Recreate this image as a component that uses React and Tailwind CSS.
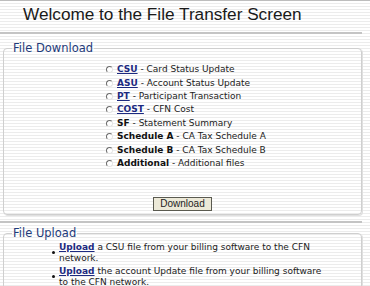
const stripes =
  "bg-[repeating-linear-gradient(to_bottom,#ffffff_0px,#ffffff_2px,#ececec_2px,#ececec_3px)]";

const Radio = () => (
  <span className="inline-block w-[7px] h-[7px] rounded-full border border-t-[#6b6b6b] border-l-[#6b6b6b] border-b-[#e4e4e4] border-r-[#e4e4e4] bg-white shrink-0" />
);

const files = [
  { code: "CSU", label: "Card Status Update", link: true },
  { code: "ASU", label: "Account Status Update", link: true },
  { code: "PT", label: "Participant Transaction", link: true },
  { code: "COST", label: "CFN Cost", link: true },
  { code: "SF", label: "Statement Summary" },
  { code: "Schedule A", label: "CA Tax Schedule A" },
  { code: "Schedule B", label: "CA Tax Schedule B" },
  { code: "Additional", label: "Additional files" },
];

const uploads = [
  "a CSU file from your billing software to the CFN network.",
  "the account Update file from your billing software to the CFN network.",
];

export default function App() {
  return (
    <div
      className={`w-[370px] h-[286px] overflow-hidden border-t border-[#bdbdbd] text-[#222] ${stripes}`}
      style={{ fontFamily: '"DejaVu Sans", Verdana, sans-serif' }}
    >
      <h1 className="pl-[23px] pt-[3px] h-[31px] text-[17.2px] leading-[20px] text-[#1a1a1a] font-['Liberation_Sans',Arial,sans-serif]">
        Welcome to the File Transfer Screen
      </h1>
      <div className="w-[362px] h-[2px] bg-[#c4c4c4]" />

      <fieldset className="ml-[3px] mt-[7px] w-[359px] border border-[#cfcfcf] rounded-[4px] px-[8px] pb-[3px] shadow-[1px_1px_0_#e0e0e0]">
        <legend className="px-[1px] text-[11.5px] leading-[14px] text-[#1f3b7a]">File Download</legend>
        <div className="ml-[94px] mt-[8px] flex flex-col">
          {files.map((f) => (
            <div key={f.code} className="flex items-center gap-[4px] h-[13.4px] text-[9px] leading-[13px]">
              <Radio />
              <span>
                {f.link ? (
                  <a href="#" className="font-bold underline text-[#1c2a80]">{f.code}</a>
                ) : (
                  <b className="text-[#111]">{f.code}</b>
                )}{" "}
                - {f.label}
              </span>
            </div>
          ))}
        </div>
        <div className="flex justify-center mt-[27px]">
          <button className="w-[59px] h-[14px] bg-[#ece9d8] border border-[#5a5a50] text-[10px] leading-[12px] text-[#222] font-['Liberation_Sans',Arial,sans-serif]">
            Download
          </button>
        </div>
      </fieldset>

      <div className="mt-[6px] w-[362px] h-[2px] bg-[#c4c4c4]" />

      <fieldset className="ml-[3px] mt-[3px] w-[359px] h-[80px] border border-[#cfcfcf] rounded-[4px] px-[8px] shadow-[1px_1px_0_#e0e0e0]">
        <legend className="px-[1px] text-[11.5px] leading-[14px] text-[#1f3b7a]">File Upload</legend>
        <ul className="ml-[40px] mt-[2px] w-[275px] flex flex-col gap-[2px]">
          {uploads.map((u, i) => (
            <li key={i} className="relative pl-[7px] text-[9px] leading-[11px]">
              <span className="absolute left-0 top-[9px] w-[3px] h-[3px] rounded-full bg-[#111]" />
              <a href="#" className="font-bold underline text-[#1c2a80]">Upload</a> {u}
            </li>
          ))}
        </ul>
      </fieldset>
    </div>
  );
}
